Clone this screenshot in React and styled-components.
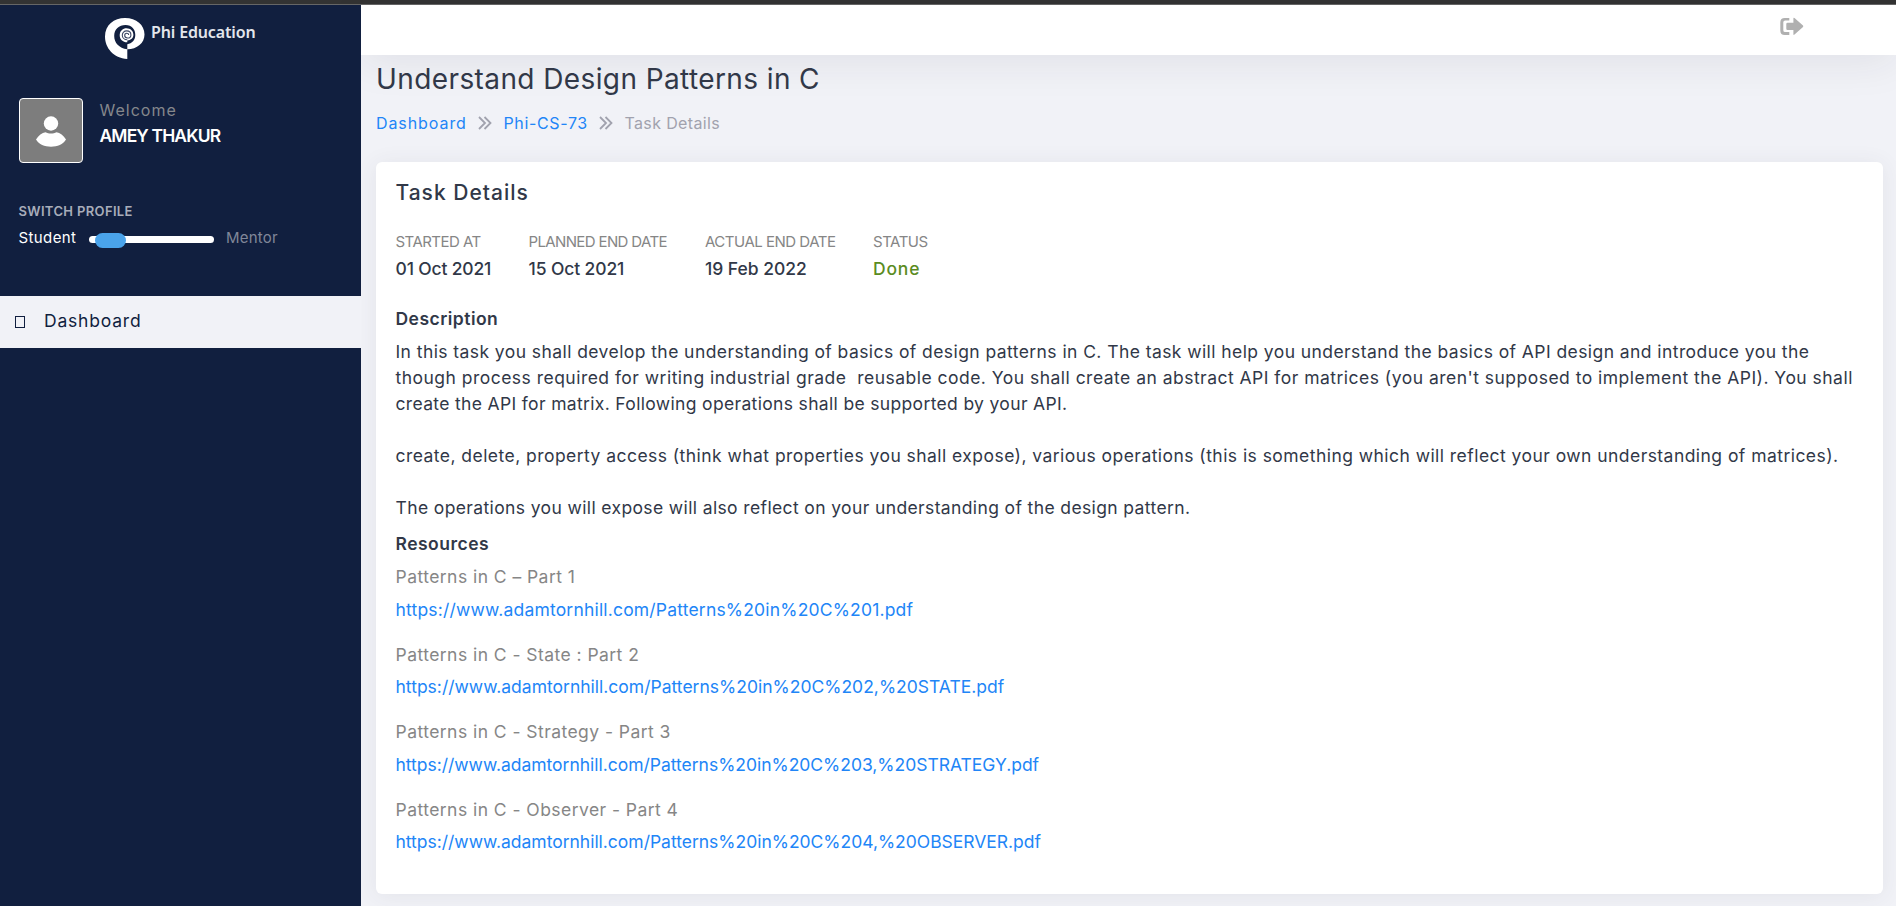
import React from 'react';
import styled, { createGlobalStyle } from 'styled-components';

const GlobalStyle = createGlobalStyle`
  * { box-sizing: border-box; }
  body {
    margin: 0;
    background: #f1f2f7;
    color: #313848;
    font-family: Inter, "Open Sans", sans-serif;
    font-kerning: normal;
    overflow: hidden;
  }
`;

const Page = styled.div`
  height: 906px;
  display: flex;
  flex-direction: column;
`;

const WindowEdge = styled.div`
  flex: none;
  height: 5px;
  background: #333333;
  border-bottom: 1px solid #666666;
`;

const Shell = styled.div`
  flex: 1;
  min-height: 0;
  display: flex;
`;

const Sidebar = styled.aside`
  flex: none;
  z-index: 1;
  width: 361px;
  background: #111f3f;
  display: flex;
  flex-direction: column;
`;

const Brand = styled.div`
  display: flex;
  height: 93px;
  padding: 12px 0 0 104px;
`;

const BrandName = styled.span`
  margin: 4px 0 0 5px;
  font: 600 16px/22px "Noto Sans", sans-serif;
  letter-spacing: -0.15px;
  color: #e3e6ec;
  white-space: nowrap;
`;

const Profile = styled.div`
  display: flex;
  padding-left: 19px;
`;

const Avatar = styled.div`
  width: 64px;
  height: 65px;
  display: flex;
  align-items: center;
  justify-content: center;
  background: #7d7d7d;
  border: 1px solid #ffffff;
  border-radius: 4px;
`;

const ProfileText = styled.div`
  padding: 0 0 0 16.5px;
`;

const Welcome = styled.div`
  font-size: 16px;
  line-height: 24px;
  letter-spacing: 1px;
  color: #85878c;
`;

const UserName = styled.div`
  font-size: 17.5px;
  line-height: 28px;
  font-weight: 600;
  letter-spacing: -0.87px;
  color: #ffffff;
`;

const SwitchSection = styled.div`
  padding: 40px 0 0 18.5px;
  height: 133px;
`;

const SwitchTitle = styled.div`
  font-size: 13px;
  line-height: 16px;
  font-weight: 600;
  letter-spacing: 0.35px;
  color: #a8adba;
`;

const SwitchRow = styled.div`
  display: flex;
  align-items: center;
  margin-top: 7px;
  height: 24px;
`;

const SwitchLabel = styled.span`
  width: ${(p) => (p.$active ? '70.5px' : 'auto')};
  font-size: 15px;
  line-height: 24px;
  letter-spacing: ${(p) => (p.$active ? '0.4px' : '0.2px')};
  color: ${(p) => (p.$active ? '#ffffff' : '#808799')};
`;

const Track = styled.div`
  display: flex;
  align-items: center;
  width: 125px;
  height: 7px;
  margin: 3px 12px 0 0;
  padding: 1px 0 0 6px;
  border-radius: 4px;
  background: #ffffff;
`;

const Knob = styled.div`
  flex: none;
  width: 31px;
  height: 15px;
  border-radius: 8px;
  background: #4aa3ea;
`;

const MenuItem = styled.a`
  display: flex;
  align-items: center;
  height: 52px;
  padding: 0 0 3px 15px;
  background: #f1f2f7;
  color: #111f3f;
  font-size: 17.5px;
  letter-spacing: 0.8px;
`;

const MissingGlyph = styled.span`
  width: 10px;
  height: 12px;
  margin: 2px 19px 0 0;
  border: 1px solid #111f3f;
`;

const Main = styled.main`
  flex: 1;
  min-width: 0;
  display: flex;
  flex-direction: column;
`;

const TopBar = styled.header`
  flex: none;
  height: 50px;
  display: flex;
  justify-content: flex-end;
  padding: 12px 92px 0 0;
  background: #ffffff;
  box-shadow: 0 8px 40px rgba(40, 42, 53, 0.08);
`;

const Content = styled.div`
  padding: 7px 13px 0 15px;
`;

const PageTitle = styled.h1`
  margin: 0;
  font-size: 28px;
  line-height: 35px;
  font-weight: 400;
  letter-spacing: 0.4px;
`;

const Breadcrumb = styled.nav`
  display: flex;
  align-items: center;
  height: 24px;
  margin-top: 14px;
  font-size: 16px;
  line-height: 24px;
`;

const Crumb = styled.span`
  color: ${(p) => (p.$link ? '#2185f7' : '#a1a2ae')};
  letter-spacing: ${(p) => p.$track}px;
`;

const Chevrons = styled.svg`
  margin: 0 11.3px 0 11.3px;
`;

const Card = styled.section`
  height: 732px;
  margin-top: 27px;
  padding: 16px 18px 0 19.5px;
  border-radius: 6px;
  background: #ffffff;
  box-shadow: 0 2px 22px rgba(69, 65, 78, 0.08);
`;

const CardTitle = styled.h2`
  margin: 0;
  font-size: 21px;
  line-height: 30px;
  font-weight: 500;
  letter-spacing: 1px;
`;

const Facts = styled.div`
  display: grid;
  grid-template-columns: 133px 176.500px 168px auto;
  margin-top: 23px;
`;

const FactLabel = styled.div`
  font-size: 15px;
  line-height: 22px;
  letter-spacing: ${(p) => p.$track}px;
  color: #868686;
  white-space: nowrap;
`;

const FactValue = styled.div`
  margin-top: 3px;
  font-size: 17.5px;
  line-height: 26px;
  font-weight: 500;
  letter-spacing: ${(p) => p.$track}px;
  color: ${(p) => (p.$done ? '#5b8c1f' : 'inherit')};
  white-space: nowrap;
`;

const SectionTitle = styled.h3`
  margin: ${(p) => p.$gap}px 0 0;
  font-size: 17.5px;
  line-height: 26px;
  font-weight: 600;
  letter-spacing: 0.48px;
`;

const Description = styled.div`
  margin-top: 6.5px;
`;

const Line = styled.div`
  height: 26.15px;
  font-size: 17.5px;
  line-height: 26.15px;
  letter-spacing: ${(p) => p.$track || 0}px;
  white-space: pre;
`;

const Resource = styled.div`
  margin-top: ${(p) => (p.$first ? 7 : 19.4)}px;
`;

const ResourceName = styled.div`
  font-size: 17.5px;
  line-height: 26px;
  letter-spacing: 0.45px;
  color: #868686;
`;

const ResourceLink = styled.a`
  display: block;
  margin-top: 6.1px;
  font-size: 17.5px;
  line-height: 26px;
  letter-spacing: ${(p) => p.$track}px;
  color: #2185f7;
`;

const facts = [
  { label: 'STARTED AT', lt: -0.54, value: '01 Oct 2021', vt: -0.17 },
  { label: 'PLANNED END DATE', lt: -0.63, value: '15 Oct 2021', vt: -0.12 },
  { label: 'ACTUAL END DATE', lt: -0.49, value: '19 Feb 2022', vt: -0.03 },
  { label: 'STATUS', lt: -0.49, value: 'Done', vt: 0.8, done: true },
];

const lines = [
  ['In this task you shall develop the understanding of basics of design patterns in C. The task will help you understand the basics of API design and introduce you the', 0.425],
  ["though process required for writing industrial grade  reusable code. You shall create an abstract API for matrices (you aren't supposed to implement the API). You shall", 0.478],
  ['create the API for matrix. Following operations shall be supported by your API.', 0.338],
  [''],
  ['create, delete, property access (think what properties you shall expose), various operations (this is something which will reflect your own understanding of matrices).', 0.452],
  [''],
  ['The operations you will expose will also reflect on your understanding of the design pattern.', 0.376],
];

const resources = [
  { name: 'Patterns in C – Part 1', url: 'https://www.adamtornhill.com/Patterns%20in%20C%201.pdf', track: 0.189 },
  { name: 'Patterns in C - State : Part 2', url: 'https://www.adamtornhill.com/Patterns%20in%20C%202,%20STATE.pdf', track: 0.005 },
  { name: 'Patterns in C - Strategy - Part 3', url: 'https://www.adamtornhill.com/Patterns%20in%20C%203,%20STRATEGY.pdf', track: -0.02 },
  { name: 'Patterns in C - Observer - Part 4', url: 'https://www.adamtornhill.com/Patterns%20in%20C%204,%20OBSERVER.pdf', track: -0.015 },
];

const Logo = () => (
  <svg width="42" height="43" viewBox="104 17 42 43" fill="none">
    <path
      fill="#fff"
      d="M127.3 59C113.5 58 105 48 105 36.5C105 25 114 18 125 18C136.500 18 144.500 25 144.500 34.500C144.500 43 137 49.300 127.300 49.300Z"
    />
    <path
      fill="#111f3f"
      d="M127.300 49.300C119 48 114.200 43 114.200 36C114.200 29 119 25 125.500 25C132 25 135.300 29.500 135.300 35C135.300 40 132 43.500 127.300 44.300Z"
    />
    <path fill="#fff" d="M127.300 42.300C122.500 42.300 119.700 39 119.700 35.200C119.700 31 123 28.300 126.500 28.300C130.500 28.300 133.400 31.200 133.400 34.800C133.400 38 131 40.200 127.300 40.500Z" />
    <path
      stroke="#3c4763"
      strokeWidth="1.1"
      d="M127.300 39.800C124.300 39.800 122.300 37.700 122.300 35.200C122.300 32.600 124.200 30.900 126.600 30.900C129.200 30.900 130.900 32.600 130.900 34.900C130.900 36.900 129.300 38 127.500 38C125.600 38 124.700 36.700 124.700 35.300C124.700 33.900 125.700 33.200 126.800 33.200C128 33.200 128.700 34 128.700 35"
    />
  </svg>
);

const Person = () => (
  <svg width="32" height="32" viewBox="0 0 32 32" fill="#fff">
    <circle cx="16" cy="8.500" r="7.200" />
    <path d="M1 24.500C3.500 20.500 7 17.700 10.500 17.300C13.500 19 18.500 19 21.500 17.300C25 17.700 28.500 20.500 31 24.500C28 29.500 22.500 31.700 16 31.700C9.500 31.700 4 29.500 1 24.500Z" />
  </svg>
);

const Logout = () => (
  <svg width="24" height="19" viewBox="0 0 24 19" fill="#b0b0b0">
    <path d="M9.300 1V3.400H5.200Q3.300 3.400 3.300 5.300V13.200Q3.300 15.100 5.200 15.100H9.300V17.900H4.800Q.3 17.900 .3 13.400V5.400Q.3 1 4.800 1Z" />
    <path d="M13.400 1.500Q13.400 .2 14.500 1.100L23 8.600Q23.600 9.300 23 10L14.500 17.600Q13.400 18.500 13.400 17.200V13H7.500Q6.300 13 6.300 11.800V7Q6.300 5.800 7.500 5.800H13.400Z" />
  </svg>
);

const Separator = () => (
  <Chevrons width="14" height="14" viewBox="0 0 14 14" fill="none" stroke="#a1a2ae" strokeWidth="1.8">
    <path d="M1 1L7 7L1 13M6.500 1L12.500 7L6.500 13" />
  </Chevrons>
);

export default function App() {
  return (
    <Page>
      <GlobalStyle />
      <WindowEdge />
      <Shell>
        <Sidebar>
          <Brand>
            <Logo />
            <BrandName>Phi Education</BrandName>
          </Brand>
          <Profile>
            <Avatar><Person /></Avatar>
            <ProfileText>
              <Welcome>Welcome</Welcome>
              <UserName>AMEY THAKUR</UserName>
            </ProfileText>
          </Profile>
          <SwitchSection>
            <SwitchTitle>SWITCH PROFILE</SwitchTitle>
            <SwitchRow>
              <SwitchLabel $active>Student</SwitchLabel>
              <Track><Knob /></Track>
              <SwitchLabel>Mentor</SwitchLabel>
            </SwitchRow>
          </SwitchSection>
          <MenuItem>
            <MissingGlyph />
            Dashboard
          </MenuItem>
        </Sidebar>
        <Main>
          <TopBar><Logout /></TopBar>
          <Content>
            <PageTitle>Understand Design Patterns in C</PageTitle>
            <Breadcrumb>
              <Crumb $link $track={0.92}>Dashboard</Crumb>
              <Separator />
              <Crumb $link $track={0.66}>Phi-CS-73</Crumb>
              <Separator />
              <Crumb $track={0.36}>Task Details</Crumb>
            </Breadcrumb>
            <Card>
              <CardTitle>Task Details</CardTitle>
              <Facts>
                {facts.map((f) => (
                  <div key={f.label}>
                    <FactLabel $track={f.lt}>{f.label}</FactLabel>
                    <FactValue $track={f.vt} $done={f.done}>{f.value}</FactValue>
                  </div>
                ))}
              </Facts>
              <SectionTitle $gap={24}>Description</SectionTitle>
              <Description>
                {lines.map(([text, track], i) => (
                  <Line key={i} $track={track}>{text}</Line>
                ))}
              </Description>
              <SectionTitle $gap={10}>Resources</SectionTitle>
              {resources.map((r, i) => (
                <Resource key={r.url} $first={i === 0}>
                  <ResourceName>{r.name}</ResourceName>
                  <ResourceLink $track={r.track}>{r.url}</ResourceLink>
                </Resource>
              ))}
            </Card>
          </Content>
        </Main>
      </Shell>
    </Page>
  );
}
